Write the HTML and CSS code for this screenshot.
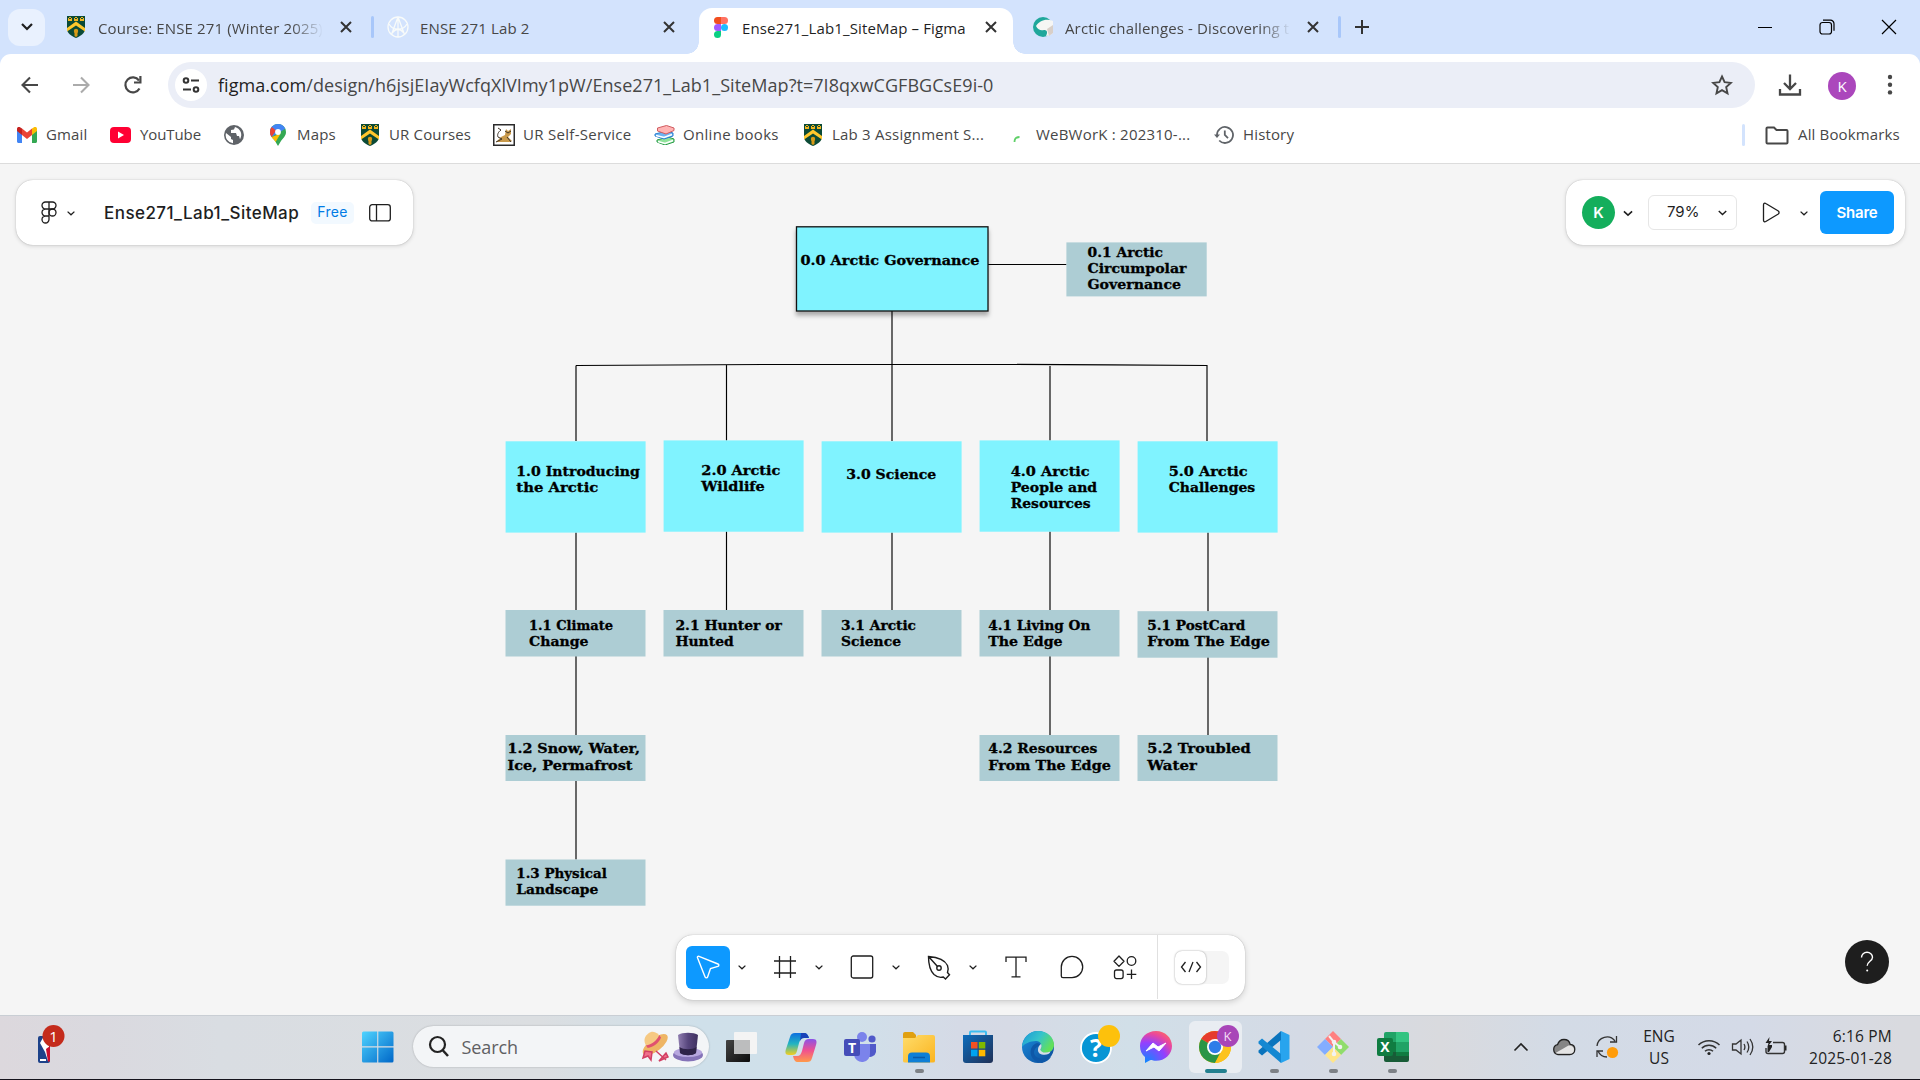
FILE: index.html
```html
<!DOCTYPE html>
<html lang="en">
<head>
<meta charset="utf-8">
<title>Ense271_Lab1_SiteMap – Figma</title>
<link rel="stylesheet" href="styles.css">
</head>
<body>
<svg class="defs" width="0" height="0" aria-hidden="true">
  <defs>
    <symbol id="close" viewBox="0 0 20 20"><path d="M5 5l10 10M15 5L5 15" fill="none" stroke="currentColor" stroke-width="2"/></symbol>
    <symbol id="chev" viewBox="0 0 10 10"><path d="M1.6 3.6L5 6.8l3.4-3.2" fill="none" stroke="#1e1e1e" stroke-width="1.3"/></symbol>
    <symbol id="crest" viewBox="0 0 18 22">
      <path d="M0 0h18v13c0 4-4 7-9 9c-5-2-9-5-9-9z" fill="#0b4a36"/>
      <path d="M1 1h4v4H1zM7 1h4v4H7zM13 1h4v4h-4z" fill="#f2b51e"/>
      <path d="M1 1l2 2 2-2M7 1l2 2 2-2M13 1l2 2 2-2" stroke="#0b4a36" fill="none"/>
      <path d="M0 12l9-6.500 9 6.500v3.500l-9-6-9 6z" fill="#ffc72c"/>
      <circle cx="9" cy="15" r="2.200" fill="#d99a16"/><path d="M7.500 16h3v4l-1.500 1-1.500-1z" fill="#d99a16"/>
    </symbol>
    <linearGradient id="win" x1="0" y1="0" x2="1" y2="1"><stop offset="0" stop-color="#4fd4ff"/><stop offset="1" stop-color="#0067c8"/></linearGradient>
    <linearGradient id="copA" x1="0" y1="0" x2="0" y2="1"><stop offset="0" stop-color="#0c6fe0"/><stop offset=".5" stop-color="#23b5c0"/><stop offset="1" stop-color="#f5cf1d"/></linearGradient>
    <linearGradient id="copB" x1="0" y1="0" x2="0" y2="1"><stop offset="0" stop-color="#8b52e8"/><stop offset=".5" stop-color="#f0518f"/><stop offset="1" stop-color="#ff9a4a"/></linearGradient>
    <linearGradient id="fold" x1="0" y1="0" x2="1" y2="1"><stop offset="0" stop-color="#ffdc6a"/><stop offset="1" stop-color="#fbb41f"/></linearGradient>
    <linearGradient id="store" x1="0" y1="0" x2="1" y2="1"><stop offset="0" stop-color="#0d6dbd"/><stop offset="1" stop-color="#203056"/></linearGradient>
    <linearGradient id="edgeA" x1="0" y1="0" x2="1" y2=".5"><stop offset="0" stop-color="#1a97d8"/><stop offset=".55" stop-color="#35c4cb"/><stop offset="1" stop-color="#62e05a"/></linearGradient>
    <linearGradient id="edgeB" x1="0" y1="0" x2="1" y2="1"><stop offset="0" stop-color="#1b8ede"/><stop offset="1" stop-color="#0c4a98"/></linearGradient>
    <radialGradient id="msg" cx=".2" cy="1" r="1.150"><stop offset="0" stop-color="#0a8bff"/><stop offset=".55" stop-color="#9340ff"/><stop offset=".8" stop-color="#e8479f"/><stop offset="1" stop-color="#ff6a60"/></radialGradient>
    <linearGradient id="tvA" x1="0" y1="0" x2="1" y2="1"><stop offset="0" stop-color="#444"/><stop offset="1" stop-color="#0c0c0c"/></linearGradient>
    <linearGradient id="hatA" x1="0" y1="0" x2="1" y2="0"><stop offset="0" stop-color="#8f7db0"/><stop offset=".5" stop-color="#57467d"/><stop offset="1" stop-color="#3f3160"/></linearGradient>
  </defs>
</svg>

<header class="tabs">
  <button class="tab-search"><svg width="14" height="10" viewBox="0 0 14 10"><path d="M2 2l5 5 5-5" fill="none" stroke="#1f1f1f" stroke-width="2.200"/></svg></button>
  <div class="tab tab-course">
    <svg width="18" height="22"><use href="#crest"/></svg>
    <span class="label fade">Course: ENSE 271 (Winter 2025)</span>
    <svg class="x" width="20" height="20"><use href="#close"/></svg>
  </div>
  <i class="sep"></i>
  <div class="tab tab-lab">
    <svg width="22" height="22" viewBox="0 0 22 22" fill="none" stroke="#f8fbfa" stroke-width="1.300"><circle cx="11" cy="11" r="10"/><path d="M11 1L4.500 18.500M11 1l6.500 17.500M2 8c4 7 14 7 18 0M5 17c4-5 8-5 12 0M11 1v20"/></svg>
    <span class="label">ENSE 271 Lab 2</span>
    <svg class="x" width="20" height="20"><use href="#close"/></svg>
  </div>
  <div class="tab tab-active">
    <svg width="14" height="21" viewBox="0 0 14 21"><path d="M3.500 0H7v7H3.500a3.500 3.500 0 010-7z" fill="#f24e1e"/><path d="M7 0h3.500a3.500 3.500 0 010 7H7z" fill="#ff7262"/><path d="M3.500 7H7v7H3.500a3.500 3.500 0 010-7z" fill="#a259ff"/><circle cx="10.500" cy="10.500" r="3.500" fill="#1abcfe"/><path d="M3.500 14H7v3.500A3.500 3.500 0 113.500 14z" fill="#0acf83"/></svg>
    <span class="label">Ense271_Lab1_SiteMap – Figma</span>
    <svg class="x" width="20" height="20"><use href="#close"/></svg>
  </div>
  <div class="tab tab-arctic">
    <svg width="20" height="20" viewBox="0 0 20 20"><circle cx="10" cy="10" r="10" fill="#1fa79b"/><path d="M3 9c3-5 10-8 17-5v12c-2 2-4 3-7 3 2-4 1-6-2-6-3 1-6 0-8-4z" fill="#f6f6f4"/><path d="M14 12l6-4v8l-4 3z" fill="#d8cfc8"/></svg>
    <span class="label fade">Arctic challenges - Discovering t</span>
    <svg class="x" width="20" height="20"><use href="#close"/></svg>
  </div>
  <i class="sep"></i>
  <svg class="plus" width="16" height="16" viewBox="0 0 16 16"><path d="M8 1v14M1 8h14" stroke="#333" stroke-width="2"/></svg>
  <div class="winctl">
    <svg width="16" height="16" viewBox="0 0 16 16"><path d="M1 8.500h14" stroke="#000"/></svg>
    <svg width="16" height="16" viewBox="0 0 16 16" fill="none" stroke="#000" stroke-width="1.200"><rect x="1" y="3.500" width="11.500" height="11.500" rx="2.500"/><path d="M4 1.200h7.500a3.500 3.500 0 013.500 3.500v7"/></svg>
    <svg width="16" height="16" viewBox="0 0 16 16"><path d="M1 1l14 14M15 1L1 15" stroke="#000" stroke-width="1.200"/></svg>
  </div>
</header>

<div class="chrome">
  <nav class="navbar">
    <svg class="back" width="22" height="22" viewBox="0 0 22 22" fill="none" stroke="#474747" stroke-width="2.100"><path d="M19 11H4M11 3.500L3.500 11l7.500 7.500"/></svg>
    <svg class="fwd" width="22" height="22" viewBox="0 0 22 22" fill="none" stroke="#ababab" stroke-width="2.100"><path d="M3 11h15M11 3.500l7.500 7.500-7.500 7.500"/></svg>
    <svg class="reload" width="22" height="22" viewBox="0 0 22 22"><path d="M17.500 14.500A7.500 7.500 0 1117 6.500" fill="none" stroke="#474747" stroke-width="2.200"/><path d="M19.500 2v7.500H12V7.400h5.300V2z" fill="#474747"/></svg>
    <div class="omnibox">
      <span class="site"><svg width="18" height="16" viewBox="0 0 18 16" fill="none" stroke="#333" stroke-width="2"><circle cx="4" cy="3.500" r="2.300"/><path d="M9 3.500h8M1 12.500h8"/><circle cx="14" cy="12.500" r="2.300"/></svg></span>
      <span class="url"><b>figma.com</b>/design/h6jsjEIayWcfqXlVImy1pW/Ense271_Lab1_SiteMap?t=7I8qxwCGFBGCsE9i-0</span>
      <svg class="star" width="22" height="22" viewBox="0 0 22 22"><path d="M11 2.500l2.600 5.700 6.200.7-4.600 4.200 1.300 6.200L11 16.100l-5.500 3.200 1.300-6.200L2.200 8.900l6.200-.7z" fill="none" stroke="#474747" stroke-width="1.900"/></svg>
    </div>
    <svg class="dl" width="24" height="24" viewBox="0 0 24 24" fill="none" stroke="#474747" stroke-width="2.300"><path d="M12 1.500v14M6 10l6 6 6-6M2 16v5.500h20V16"/></svg>
    <span class="avatar purple">K</span>
    <svg class="dots" width="6" height="22" viewBox="0 0 6 22" fill="#474747"><circle cx="3" cy="3" r="2.200"/><circle cx="3" cy="10.700" r="2.200"/><circle cx="3" cy="18.400" r="2.200"/></svg>
  </nav>
  <nav class="bookmarks">
    <a class="bm gmail"><svg width="20" height="16" viewBox="0 0 20 16"><path d="M0 2v12.500c0 .8.700 1.500 1.500 1.500H5V5.500z" fill="#4285f4"/><path d="M20 2v12.500c0 .8-.7 1.500-1.500 1.500H15V5.500z" fill="#34a853"/><path d="M15 1.500L17 .3c1.500-1 3 0 3 1.800V4l-5 4z" fill="#fbbc04"/><path d="M5 1.500L3 .3C1.500-.7 0 .3 0 2.100V4l5 4z" fill="#c5221f"/><path d="M5 1.500l5 4 5-4V8l-5 4-5-4z" fill="#ea4335"/></svg><span>Gmail</span></a>
    <a class="bm yt"><svg width="21" height="16" viewBox="0 0 21 16"><rect width="21" height="16" rx="4" fill="#ff0033"/><path d="M8 4.500v7l6-3.500z" fill="#fff"/></svg><span>YouTube</span></a>
    <a class="bm globe"><svg width="20" height="20" viewBox="0 0 20 20"><circle cx="10" cy="10" r="10" fill="#5f6368"/><path d="M2 8l5 4v2l2 1v3.200A8 8 0 012 8zM11 2.100l-1 2.400-3 .5v3h5l1 3h2l1 3.200A8 8 0 0011 2.100z" fill="#fff"/></svg></a>
    <a class="bm maps"><svg width="16" height="22" viewBox="0 0 16 22"><path d="M8 0a8 8 0 00-8 8c0 4 3 6 5 9l3 5 3-5c2-3 5-5 5-9a8 8 0 00-8-8z" fill="#34a853"/><path d="M8 0a8 8 0 017.300 4.800L1.500 13C.6 11.500 0 10 0 8a8 8 0 018-8z" fill="#4285f4"/><path d="M0 8c0-2 .7-3.700 1.800-5.100L6 6.500 1.600 13C.6 11.500 0 10 0 8z" fill="#ea4335"/><path d="M1.600 13L10.500 9.700 5.600 18C4.500 16 2.500 14.600 1.600 13z" fill="#fbbc04"/><circle cx="8" cy="8" r="2.900" fill="#fff"/></svg><span>Maps</span></a>
    <a class="bm urc"><svg width="18" height="22"><use href="#crest"/></svg><span>UR Courses</span></a>
    <a class="bm urs"><svg width="22" height="22" viewBox="0 0 22 22"><rect x=".75" y=".75" width="20.500" height="20.500" fill="#fff" stroke="#2b2b2b" stroke-width="1.500"/><path d="M3 18l5-5 4-2 1-6 2 2 3-2v5l-3 3 4 4-2 1z" fill="#c99a4b"/><path d="M8 6c-3 2-4 5-3 7l4 2M12 7l3 2 3-2M3 18l6-3M14 13l4 5M5 4l3 2" fill="none" stroke="#3c3227"/></svg><span>UR Self-Service</span></a>
    <a class="bm books"><svg width="22" height="20" viewBox="0 0 22 20" stroke-width="1"><path d="M3 15l11-3 6 2v3l-9 3-8-3z" fill="#8fe39a" stroke="#2a9b4a"/><path d="M4 16.500l7 2 8-3" stroke="#fff" stroke-width="1.500" fill="none"/><path d="M1 9l12-3 6 2v3l-9 3-9-3z" fill="#6cb4f2" stroke="#2c7fd0"/><path d="M2 10.500l8 2 8-3" stroke="#fff" stroke-width="1.500" fill="none"/><path d="M3.500 3l9-2.500L20 3v2.500L12 9 3.500 6z" fill="#ffb4b4" stroke="#d05b5f"/></svg><span>Online books</span></a>
    <a class="bm lab3"><svg width="18" height="22"><use href="#crest"/></svg><span>Lab 3 Assignment S...</span></a>
    <a class="bm wework"><svg width="9" height="20" viewBox="0 0 9 20"><path d="M1.500 17c0-4 2-5 5-5" fill="none" stroke="#5fd068" stroke-width="1.800"/></svg><span>WeBWorK : 202310-...</span></a>
    <a class="bm hist"><svg width="20" height="20" viewBox="0 0 20 20" fill="none" stroke="#5f6368" stroke-width="1.800"><path d="M3 10a8 8 0 112.200 5.500M10.800 5.500V10l3.200 3.200"/><path d="M0 9.500h6L3 13z" fill="#5f6368" stroke="none"/></svg><span>History</span></a>
    <i class="bsep"></i>
    <a class="bm all"><svg width="24" height="19" viewBox="0 0 24 19"><path d="M1.500 2.500a1 1 0 011-1H9L11.500 4h10a1 1 0 011 1v11.500a1 1 0 01-1 1h-19a1 1 0 01-1-1z" fill="none" stroke="#474747" stroke-width="2"/></svg><span>All Bookmarks</span></a>
  </nav>
</div>

<main class="canvas">
  <svg class="sitemap" width="1920" height="851" viewBox="0 164 1920 851">
    <g class="wires">
      <path d="M988 264.500h78.500M892 311v130M576 441v-75.500M576 365.500Q892 363 1207 365.500V441M726.500 365v75.500M1050 366v74.500"/>
      <path d="M576 532.500V610M726.500 531.500V610M892 532.500V610M1050 531.500V610M1208 532.500V611.500"/>
      <path d="M576 656v79M1050 656v79M1208 657v78M576 781v78.500"/>
    </g>
    <rect class="main root" x="796.500" y="226.800" width="191.500" height="84.200"/>
    <rect class="sub" x="1066.400" y="242.400" width="140.300" height="54"/>
    <rect class="main" x="505.600" y="441.300" width="140" height="91.300"/>
    <rect class="main" x="663.600" y="440.400" width="140" height="91.300"/>
    <rect class="main" x="821.600" y="441.300" width="140" height="91.300"/>
    <rect class="main" x="979.600" y="440.400" width="140" height="91.300"/>
    <rect class="main" x="1137.600" y="441.300" width="140" height="91.300"/>
    <rect class="sub" x="505.500" y="610" width="140" height="46.500"/>
    <rect class="sub" x="663.500" y="610" width="140" height="46.500"/>
    <rect class="sub" x="821.500" y="610" width="140" height="46.500"/>
    <rect class="sub" x="979.500" y="610" width="140" height="46.500"/>
    <rect class="sub" x="1137.500" y="611.200" width="140" height="46.500"/>
    <rect class="sub" x="505.500" y="735" width="140" height="46"/>
    <rect class="sub" x="979.500" y="735" width="140" height="46"/>
    <rect class="sub" x="1137.500" y="735" width="140" height="46"/>
    <rect class="sub" x="505.500" y="859.500" width="140" height="46.200"/>
    <g class="names">
      <text x="800.500" y="265.300" textLength="179" lengthAdjust="spacingAndGlyphs">0.0 Arctic Governance</text>
      <text x="1087.500" y="257" textLength="75.500" lengthAdjust="spacingAndGlyphs">0.1 Arctic</text>
      <text x="1087.500" y="273.200" textLength="99" lengthAdjust="spacingAndGlyphs">Circumpolar</text>
      <text x="1087.500" y="289.400" textLength="93.500" lengthAdjust="spacingAndGlyphs">Governance</text>
      <text x="516.300" y="476" textLength="123.500" lengthAdjust="spacingAndGlyphs">1.0 Introducing</text>
      <text x="516.300" y="492.200" textLength="82" lengthAdjust="spacingAndGlyphs">the Arctic</text>
      <text x="701.300" y="475" textLength="79" lengthAdjust="spacingAndGlyphs">2.0 Arctic</text>
      <text x="701.300" y="491.200" textLength="63.500" lengthAdjust="spacingAndGlyphs">Wildlife</text>
      <text x="846.300" y="479.200" textLength="90" lengthAdjust="spacingAndGlyphs">3.0 Science</text>
      <text x="1010.700" y="476" textLength="79" lengthAdjust="spacingAndGlyphs">4.0 Arctic</text>
      <text x="1010.700" y="492.200" textLength="86.500" lengthAdjust="spacingAndGlyphs">People and</text>
      <text x="1010.700" y="508.400" textLength="80" lengthAdjust="spacingAndGlyphs">Resources</text>
      <text x="1168.700" y="476" textLength="79" lengthAdjust="spacingAndGlyphs">5.0 Arctic</text>
      <text x="1168.700" y="492.200" textLength="86.500" lengthAdjust="spacingAndGlyphs">Challenges</text>
      <text x="529" y="629.800" textLength="84" lengthAdjust="spacingAndGlyphs">1.1 Climate</text>
      <text x="529" y="646" textLength="59.500" lengthAdjust="spacingAndGlyphs">Change</text>
      <text x="675.400" y="629.800" textLength="106.500" lengthAdjust="spacingAndGlyphs">2.1 Hunter or</text>
      <text x="675.400" y="646" textLength="58.300" lengthAdjust="spacingAndGlyphs">Hunted</text>
      <text x="841" y="629.800" textLength="75" lengthAdjust="spacingAndGlyphs">3.1 Arctic</text>
      <text x="841" y="646" textLength="60" lengthAdjust="spacingAndGlyphs">Science</text>
      <text x="988.300" y="629.800" textLength="102" lengthAdjust="spacingAndGlyphs">4.1 Living On</text>
      <text x="988.300" y="646" textLength="74.300" lengthAdjust="spacingAndGlyphs">The Edge</text>
      <text x="1147.300" y="629.800" textLength="98" lengthAdjust="spacingAndGlyphs">5.1 PostCard</text>
      <text x="1147.300" y="646" textLength="122.500" lengthAdjust="spacingAndGlyphs">From The Edge</text>
      <text x="507.500" y="753.400" textLength="132.500" lengthAdjust="spacingAndGlyphs">1.2 Snow, Water,</text>
      <text x="507.500" y="769.600" textLength="125" lengthAdjust="spacingAndGlyphs">Ice, Permafrost</text>
      <text x="988.300" y="753.400" textLength="109" lengthAdjust="spacingAndGlyphs">4.2 Resources</text>
      <text x="988.300" y="769.600" textLength="122.500" lengthAdjust="spacingAndGlyphs">From The Edge</text>
      <text x="1147.300" y="753.400" textLength="103.500" lengthAdjust="spacingAndGlyphs">5.2 Troubled</text>
      <text x="1147.300" y="769.600" textLength="49.500" lengthAdjust="spacingAndGlyphs">Water</text>
      <text x="516.300" y="878" textLength="90.500" lengthAdjust="spacingAndGlyphs">1.3 Physical</text>
      <text x="516.300" y="894.200" textLength="82" lengthAdjust="spacingAndGlyphs">Landscape</text>
    </g>
  </svg>

  <div class="overlay">
    <div class="row-top">
      <section class="panel file">
        <svg class="logo" width="16" height="23" viewBox="0 0 16 23" fill="none" stroke="#1e1e1e" stroke-width="1.300"><path d="M8 1H4.500a3.500 3.500 0 000 7H8zM8 1h3.500a3.500 3.500 0 010 7H8zM8 8H4.500a3.500 3.500 0 000 7H8zM8 15H4.500A3.500 3.500 0 108 18.500z"/><circle cx="11.500" cy="11.500" r="3.500"/></svg>
        <svg width="10" height="10"><use href="#chev"/></svg>
        <h1>Ense271_Lab1_SiteMap</h1>
        <span class="free">Free</span>
        <svg width="22" height="18" viewBox="0 0 22 18" fill="none" stroke="#1e1e1e" stroke-width="1.300"><rect x=".7" y=".7" width="20.600" height="16.200" rx="2.500"/><path d="M7.500 .7v16.200"/></svg>
      </section>
      <section class="panel share">
        <span class="avatar green">K</span>
        <svg class="c1" width="12" height="12"><use href="#chev"/></svg>
        <div class="zoom"><span>79%</span><svg width="11" height="11"><use href="#chev"/></svg></div>
        <svg class="play" width="19" height="21" viewBox="0 0 19 21"><path d="M1.500 2.800C1.500 1.400 2.700 .8 3.800 1.500L16.300 9c1 .7 1 2.300 0 3L3.800 19.500c-1.100.7-2.300.1-2.300-1.300z" fill="none" stroke="#1e1e1e" stroke-width="1.300"/></svg>
        <svg class="c2" width="10" height="10"><use href="#chev"/></svg>
        <button class="share-btn">Share</button>
      </section>
    </div>

    <div class="row-bottom">
      <section class="panel tools">
        <span class="tool on"><svg width="24" height="24" viewBox="0 0 24 24"><path d="M1.500 2.800C1 1.700 2 .9 3 1.300L22 9c1.200.5 1.100 2.100-.1 2.400L14.500 13.500 11.600 22c-.4 1.200-2 1.200-2.500 0z" fill="none" stroke="#fff" stroke-width="1.400"/></svg></span>
        <svg class="tc" width="10" height="10"><use href="#chev"/></svg>
        <span class="tool"><svg width="22" height="24" viewBox="0 0 22 24" stroke="#1e1e1e" stroke-width="1.300"><path d="M5.500 1v22M16.500 1v22M0 6h22M0 18h22"/></svg></span>
        <svg class="tc" width="10" height="10"><use href="#chev"/></svg>
        <span class="tool"><svg width="24" height="24" viewBox="0 0 24 24"><rect x="1.300" y="1" width="21.400" height="22" rx="2" fill="none" stroke="#1e1e1e" stroke-width="1.300"/></svg></span>
        <svg class="tc" width="10" height="10"><use href="#chev"/></svg>
        <span class="tool"><svg width="24" height="25" viewBox="0 0 24 25" fill="none" stroke="#1e1e1e" stroke-width="1.400"><path d="M1.500 1.500l9 10M1.500 1.500C8 2 17.500 4 20.500 10.500c1 2.500.5 5.500 0 7l2 2.200-4 4.300-2.200-2c-3 .8-6.500 0-9.300-2.500C2.500 15 1.500 7 1.500 1.500z"/><circle cx="12" cy="13" r="2.200"/></svg></span>
        <svg class="tc" width="10" height="10"><use href="#chev"/></svg>
        <span class="tool t-text"><svg width="22" height="22" viewBox="0 0 22 22" fill="none" stroke="#1e1e1e" stroke-width="1.300"><path d="M1 6V1.200h20V6M11 1.200v19.600M6.500 20.800h9"/></svg></span>
        <span class="tool t-chat"><svg width="24" height="24" viewBox="0 0 24 24"><path d="M1.300 12a10.700 10.700 0 1110.700 10.700H3a1.700 1.700 0 01-1.700-1.700z" fill="none" stroke="#1e1e1e" stroke-width="1.300"/></svg></span>
        <span class="tool t-res"><svg width="24" height="25" viewBox="0 0 24 25" fill="none" stroke="#1e1e1e" stroke-width="1.300"><path d="M6 1l5 5.200-5 5.200-5-5.200z" stroke-linejoin="round"/><circle cx="18.500" cy="6" r="4.300"/><rect x="1.500" y="15" width="8.600" height="8.600" rx="2"/><path d="M18.500 14.500v9.500M13.800 19.300h9.500"/></svg></span>
        <i class="divider"></i>
        <span class="dev"><span class="knob"><svg width="22" height="12" viewBox="0 0 22 12" fill="none" stroke="#1e1e1e" stroke-width="1.300"><path d="M5.500 1L1.500 6l4 5M16.500 1l4 5-4 5M13 1L9 11"/></svg></span></span>
      </section>
      <button class="help"><svg width="14" height="22" viewBox="0 0 14 22"><path d="M1.500 6.500C1.500 3.500 4 1.200 7 1.200s5.500 2.200 5.500 5c0 4-5.300 4.300-5.300 8.600" fill="none" stroke="#fff" stroke-width="1.400"/><circle cx="7.200" cy="19.500" r="1" fill="#fff"/></svg></button>
    </div>
  </div>
</main>

<footer class="taskbar">
  <div class="widgets">
    <svg width="36" height="44" viewBox="0 0 36 44"><rect x="2" y="14" width="12" height="27" rx="2" fill="#1d428a"/><path d="M8 14h5v25h-1L9 30l-5-9z" fill="#fff"/><path d="M10 27l4-3v15l-2 1z" fill="#c8102e"/><path d="M4 38h6" stroke="#fff" stroke-width="2"/><circle cx="17.500" cy="14" r="11" fill="#c42b1c"/><text x="17.500" y="19.500" text-anchor="middle" font-size="15" fill="#fff">1</text></svg>
  </div>
  <div class="start"><svg width="32" height="32" viewBox="0 0 32 32" fill="url(#win)"><path d="M0 2q0-1.500 1.500-1.500H15.200V15.200H0zM16.300 .5H30q1.500 0 1.500 1.500v13.200H16.300zM0 16.500h15.200V31.500H1.500Q0 31.500 0 30zM16.300 16.500h15.200V30q0 1.500-1.500 1.500H16.300z"/></svg></div>
  <div class="search">
    <svg width="22" height="24" viewBox="0 0 22 24"><circle cx="9.500" cy="9.500" r="7.500" fill="none" stroke="#222" stroke-width="2.200"/><path d="M14.500 15l5.500 6" stroke="#222" stroke-width="2.500"/></svg>
    <span>Search</span>
    <svg width="64" height="34" viewBox="0 0 64 34">
      <g transform="rotate(-38 14 13)"><ellipse cx="14" cy="15" rx="15" ry="6.500" fill="#eeb564"/><path d="M6 13c0-7 3-11 9-11s8 4 8 11z" fill="#f6c983"/><path d="M6 13c5 3 12 3 17 0v-3c-5 3-12 3-17 0z" fill="#e0516f"/></g>
      <path d="M5 21l-2 7 5-2 3 4 1-8zM16 21l10 9M26 23l-7 8 9-4z" fill="#ef6f8a" stroke="#d23f63" stroke-width="1.500"/>
      <ellipse cx="48" cy="25" rx="15" ry="6.500" fill="#8573b8"/><ellipse cx="48" cy="22.500" rx="14" ry="4.500" fill="#b6a6de"/><path d="M38 5c4-3 16-3 20 0l-2 18c-4 3-12 3-16 0z" fill="url(#hatA)"/><path d="M39.500 17c4 3 13 3 17 0l-.5 6c-4 3-12 3-16 0z" fill="#2e2348"/>
    </svg>
  </div>
  <div class="apps">
    <span class="app"><svg width="36" height="34" viewBox="0 0 36 34"><rect x="2" y="10" width="24" height="22" rx="1" fill="url(#tvA)"/><rect x="10" y="2" width="23" height="22" rx="1" fill="#f4f4f4"/><rect x="10" y="10" width="16" height="14" fill="#bcbdbe"/></svg></span>
    <span class="app"><svg width="34" height="34" viewBox="0 0 34 34"><path d="M11 3h9c3 0 4 2 5 5h-5c-3 0-4 2-5 5l-2 8c-1 3-2 4-5 4H5c-4 0-4-3-3-6l4-12c1-3 2-4 5-4z" fill="url(#copA)"/><path d="M17 3h3c3 0 4 2 5 5h-5c-2 0-3 1-4 3z" fill="#1841b8"/><path d="M23 32h-9c-3 0-4-2-5-6h4c3 0 4-2 5-5l2-8c1-3 2-4 5-4h4c4 0 4 3 3 6l-4 13c-1 3-2 4-5 4z" fill="url(#copB)"/></svg></span>
    <span class="app"><svg width="34" height="34" viewBox="0 0 34 34"><circle cx="29" cy="9" r="3.600" fill="#5059c9"/><path d="M24 14h9v8a6 6 0 01-9 4z" fill="#5059c9"/><circle cx="19" cy="7" r="5" fill="#7b83eb"/><path d="M11 14h16v9a8 8 0 01-16 2z" fill="#7b83eb"/><rect x="1" y="9" width="16" height="17" rx="2" fill="#454db8"/><text x="9" y="22.500" text-anchor="middle" font-size="14" font-weight="bold" fill="#fff">T</text></svg></span>
    <span class="app run"><svg width="34" height="34" viewBox="0 0 34 34"><path d="M1 4q0-2 2-2h8l3 3v7H1z" fill="#e0a010"/><path d="M1 8h12l3-3h15q2 0 2 2v24q0 1.500-2 1.500H3Q1 32.500 1 31z" fill="url(#fold)"/><path d="M6 32.500v-6q0-4 4-4h14q4 0 4 4v6z" fill="#0f7fd6"/><path d="M11 27.500h12" stroke="#0a5aa8" stroke-width="1.500"/></svg></span>
    <span class="app"><svg width="34" height="34" viewBox="0 0 34 34"><path d="M9 6V2.500q0-1 1-1h14q1 0 1 1V6" fill="none" stroke="#3cbdf2" stroke-width="2"/><path d="M2 5h30v25q0 3-3 3H5q-3 0-3-3z" fill="url(#store)"/><path d="M10 12h6.500v6.500H10z" fill="#f25022"/><path d="M17.800 12h6.500v6.500h-6.500z" fill="#7fba00"/><path d="M10 19.800h6.500v6.500H10z" fill="#00a4ef"/><path d="M17.800 19.800h6.500v6.500h-6.500z" fill="#ffb900"/></svg></span>
    <span class="app"><svg width="34" height="34" viewBox="0 0 34 34"><circle cx="17" cy="17" r="16" fill="url(#edgeB)"/><path d="M1 17C2 7 9 1 17 1c9 0 16 6 16 14 0 5-4 8-9 8-3 0-5-1-5-3 3-4 1-9-4-9-6 0-12 3-14 6z" fill="url(#edgeA)"/><path d="M19 20c-1-1 2-2 1-5-3 1-7 3-7 8 1 6 8 7 17 4-2 3-5 5-9 6-8-1-13-7-11-14 1-3 3-5 6-6 5 1 5 5 3 7z" fill="#0e58a8"/><path d="M20 14c1.500 3-.5 4.500-.5 6 .5 2.500 5 3.500 10 1.500-1 4-8 4-11 2-2.500-2-2-7 1.500-9.500z" fill="#d5dde8"/></svg></span>
    <span class="app"><svg width="36" height="38" viewBox="0 0 36 38"><circle cx="17" cy="20" r="15" fill="#0795d4" stroke="#fff" stroke-width="1.800"/><text x="17" y="29" text-anchor="middle" font-size="25" font-weight="bold" fill="#fff">?</text></svg><i class="badge yellow"></i></span>
    <span class="app"><svg width="34" height="34" viewBox="0 0 34 34"><path d="M17 1C8 1 1 7.500 1 16c0 5 2 8.500 5 11v6l5.500-3c2 .6 3.500.8 5.500.8 9 0 16-6.500 16-14.800S26 1 17 1z" fill="url(#msg)"/><path d="M7 21l7-8 5 4 8-4-7 8-5-4z" fill="#fff" stroke="#fff"/></svg></span>
    <span class="app front run"><svg width="34" height="34" viewBox="0 0 34 34"><circle cx="17" cy="17" r="16" fill="#fbbc05"/><path d="M17 17L3.150 9A16 16 0 0130.850 9z" fill="#e63b2e"/><path d="M17 17L3.150 9A16 16 0 0017 33l6-12z" fill="#2a9547"/><path d="M17 9h13.850A16 16 0 0117 33l7-12z" fill="#fcc31e"/><circle cx="17" cy="17" r="8" fill="#fff"/><circle cx="17" cy="17" r="6.200" fill="#2f7de9"/></svg><i class="badge violet">K</i></span>
    <span class="app run"><svg width="34" height="34" viewBox="0 0 34 34"><path d="M24 1l8.500 4v24L24 33l-1-8V9z" fill="#28a4ee"/><path d="M24 1v9L5 25.500 1.500 22.500v-2z" fill="#0a74bd"/><path d="M24 33v-9L5 8.500l-3.500 3v2z" fill="#1488d2"/></svg></span>
    <span class="app run"><svg width="34" height="34" viewBox="0 0 34 34"><path d="M17 1l8 8-8 8-8-8z" fill="#ff8080"/><path d="M9 9l8 8-8 8-8-8z" fill="#83adff"/><path d="M25 9l8 8-8 8-8-8z" fill="#90dd6c"/><path d="M17 17l8 8-8 8-8-8z" fill="#ffe58a"/><path d="M13 6l5 6v12M18 12l6 5" stroke="#f2f2f2" stroke-width="2" fill="none"/><g fill="#f2f2f2"><circle cx="18" cy="12" r="2.300"/><circle cx="18" cy="24" r="2.300"/><circle cx="24" cy="17" r="2.300"/></g></svg></span>
    <span class="app run"><svg width="34" height="34" viewBox="0 0 34 34"><path d="M8 4q0-2 2-2h10v10H8z" fill="#21a366"/><path d="M20 2h11q2 0 2 2v8H20z" fill="#33c481"/><path d="M8 12h12v10H8z" fill="#107c41"/><path d="M20 12h13v10H20z" fill="#21a366"/><path d="M8 22h25v8q0 2-2 2H10q-2 0-2-2z" fill="#185c37"/><path d="M20 22h13v4H20z" fill="#107c41"/><rect x="1" y="8" width="16" height="18" rx="2" fill="#107c41"/><text x="9" y="22" text-anchor="middle" font-size="14" font-weight="bold" fill="#fff">X</text></svg></span>
  </div>
  <div class="tray">
    <span><svg width="16" height="10" viewBox="0 0 16 10"><path d="M1.500 8.500L8 2l6.500 6.500" fill="none" stroke="#222" stroke-width="1.600"/></svg></span>
    <span><svg width="24" height="18" viewBox="0 0 24 18"><path d="M6 16.500a5 5 0 01-.5-9.800C6.500 3.500 9 1.500 12 1.500c3.200 0 5.500 2 6.200 4.800 3 .2 4.600 2.500 4.600 5 0 3-2 5.200-5 5.200z" fill="#858585" stroke="#222" stroke-width="1.300"/><path d="M3.500 15l13-7.500c4 0 5.500 2 5.500 4.200 0 2.500-1.800 4-4 4H6z" fill="#e4e4e4"/></svg></span>
    <span><svg width="24" height="26" viewBox="0 0 24 26"><path d="M2 12A10 10 0 0120 7M21.500 2v6H15M2 23v-6h6M3 17a10 10 0 009 6" fill="none" stroke="#333" stroke-width="1.300"/><circle cx="17.500" cy="18.500" r="5.600" fill="#ff9c0a"/></svg></span>
    <span class="lang">ENG<br>US</span>
    <span><svg width="24" height="18" viewBox="0 0 24 18" fill="none" stroke="#333" stroke-width="1.500"><path d="M1.500 7a14.800 14.800 0 0121 0M4.800 10.300a10.200 10.200 0 0114.400 0M8 13.300a5.700 5.700 0 018 0"/><circle cx="12" cy="15.500" r="1.600" fill="#222" stroke="none"/></svg></span>
    <span><svg width="24" height="20" viewBox="0 0 24 20" fill="none" stroke="#333" stroke-width="1.300"><path d="M1.500 7v6H5l5 4V3L5 7zM13 7q1.800 3 0 6M16 4.500q3.600 5.500 0 11M19 2q5.600 8 0 16"/></svg></span>
    <span><svg width="24" height="20" viewBox="0 0 24 20"><path d="M9 5.500h9.500a2 2 0 012 2v7a2 2 0 01-2 2H4a2 2 0 01-2-2V11" fill="none" stroke="#333" stroke-width="1.400"/><path d="M21 8.500h1.500v5H21zM4 8h4v2L5 15H3.500v-4z" fill="#222"/><path d="M5.500 0L1.500 6h3l-1 4L8 4H5z" fill="#222"/></svg></span>
    <span class="clock">6:16 PM<br>2025-01-28</span>
  </div>
</footer>
</body>
</html>
```
FILE: styles.css
```css
* { box-sizing: border-box; }
body {
  margin: 0;
  width: 1920px;
  height: 1080px;
  overflow: hidden;
  display: flex;
  flex-direction: column;
  font-family: "Open Sans", "Noto Sans", sans-serif;
  color: #1f1f1f;
  background: #f5f5f5;
}
svg { display: block; flex: none; }
.defs { position: absolute; }
button { border: 0; padding: 0; font: inherit; }
i { font-style: normal; }

/* tab strip */
.tabs {
  flex: none;
  height: 54px;
  display: flex;
  align-items: center;
  padding-left: 8px;
  background: #d3e3fd;
}
.tab-search {
  width: 37px; height: 37px;
  margin-right: 10px;
  border-radius: 12px;
  background: #e9f1fe;
  display: grid;
  place-items: center;
}
.tab {
  height: 46px;
  margin-top: 8px;
  padding-bottom: 8px;
  display: flex;
  align-items: center;
  font-size: 15px;
  color: #474747;
}
.tab .label {
  flex: 1;
  min-width: 0;
  white-space: nowrap;
  overflow: hidden;
  padding-top: 2px;
  letter-spacing: 0.14px;
}
.fade { -webkit-mask-image: linear-gradient(90deg, #000 86%, transparent); mask-image: linear-gradient(90deg, #000 86%, transparent); }
.tab .x { color: #333; }
.tab-course { width: 316px; padding-left: 12px; padding-right: 15px; gap: 13px; }
.tab-lab { width: 325px; padding-left: 13px; padding-right: 20px; gap: 11px; }
.tab-arctic { width: 325px; padding-left: 20px; padding-right: 15px; gap: 12px; }
.tab-active {
  position: relative;
  width: 314px;
  padding-left: 15px;
  padding-right: 12px;
  gap: 14px;
  border-radius: 13px 13px 0 0;
  background: #fff;
  color: #1f1f1f;
}
.tab-active::before, .tab-active::after {
  content: "";
  position: absolute;
  bottom: 0;
  width: 12px; height: 12px;
}
.tab-active::before { left: -12px; background: radial-gradient(circle at 0 0, transparent 11.5px, #fff 12px); }
.tab-active::after { right: -12px; background: radial-gradient(circle at 100% 0, transparent 11.5px, #fff 12px); }
.sep { width: 3px; height: 22px; border-radius: 2px; background: #a8c7fa; }
.plus { margin-left: 13px; }
.winctl { margin-left: auto; margin-right: 23px; display: flex; gap: 46px; }

/* address bar and bookmarks */
.chrome {
  flex: none;
  height: 110px;
  background: linear-gradient(#d3e3fd, #d3e3fd) top / 100% 12px no-repeat;
  border-bottom: 1px solid #dcdcdc;
}
.navbar {
  height: 62px;
  display: flex;
  align-items: center;
  padding-left: 19px;
  background: #fff;
  border-radius: 11px 11px 0 0;
}
.fwd { margin-left: 29px; }
.reload { margin-left: 30px; }
.omnibox {
  width: 1587px; height: 46px;
  margin-left: 24px;
  padding: 0 22px 0 7px;
  border-radius: 23px;
  background: #ebeef7;
  display: flex;
  align-items: center;
}
.site {
  width: 32px; height: 32px;
  border-radius: 50%;
  background: #fff;
  display: grid;
  place-items: center;
}
.url {
  flex: 1;
  margin-left: 11px;
  padding-bottom: 1px;
  font-size: 18px;
  color: #474747;
  letter-spacing: 0.05px;
}
.url b { font-weight: 400; color: #1f1f1f; }
.dl { margin-left: 23px; }
.avatar {
  display: grid;
  place-items: center;
  border-radius: 50%;
  color: #fff;
}
.purple { width: 28px; height: 28px; margin: 2px 0 0 26px; background: #ab47bc; font-size: 15px; }
.dots { margin-left: 31px; }
.bookmarks {
  height: 47px;
  padding: 0 20px 9px 17px;
  display: flex;
  align-items: center;
  background: #fff;
  font-size: 15px;
  color: #474747;
}
.bm { display: flex; align-items: center; white-space: nowrap; letter-spacing: 0.15px; }
.bm span { padding-bottom: 2px; }
.gmail { width: 93px; gap: 9px; }
.yt { width: 114px; gap: 9px; letter-spacing: -0.1px; }
.globe { width: 46px; }
.maps { width: 91px; gap: 11px; }
.urc { width: 132px; gap: 10px; }
.urs { width: 161px; gap: 8px; letter-spacing: 0.3px; }
.books { width: 150px; gap: 7px; letter-spacing: 0.3px; }
.lab3 { width: 209px; gap: 10px; letter-spacing: 0.22px; }
.wework { width: 201px; gap: 14px; letter-spacing: 0.22px; }
.hist { gap: 9px; }
.bsep { width: 3px; height: 22px; margin-left: auto; margin-right: 20px; border-radius: 2px; background: #d3e3fd; }
.all { width: 135px; gap: 9px; }

/* design canvas */
.canvas { flex: none; height: 851px; position: relative; background: #f5f5f5; }
.sitemap { position: absolute; inset: 0; }
.wires path { fill: none; stroke: #000; stroke-width: 1.150; }
.main { fill: #80f3ff; }
.sub { fill: #adcdd4; }
.root { stroke: #111; stroke-width: 1.300; filter: drop-shadow(0 4px 2px rgba(0, 0, 0, .3)); }
.names text {
  font-family: "DejaVu Serif", serif;
  font-weight: 700;
  font-size: 13px;
  fill: #000;
  stroke: #000;
  stroke-width: 0.3px;
}
.overlay {
  position: absolute;
  inset: 0;
  padding: 16px 15px 15px 16px;
  display: flex;
  flex-direction: column;
  justify-content: space-between;
  font-family: Inter, sans-serif;
}
.row-top { display: flex; justify-content: space-between; }
.panel {
  height: 65px;
  border-radius: 17px;
  background: #fff;
  box-shadow: 0 0 1px rgba(0, 0, 0, .3), 0 1px 4px rgba(0, 0, 0, .15);
  display: flex;
  align-items: center;
}
.file { width: 397px; padding-left: 25px; }
.file .logo { margin-right: 9px; }
.file h1 {
  width: 196px;
  margin: 0 11px 0 28px;
  font-size: 17px;
  font-weight: 500;
  letter-spacing: 0.45px;
  color: #1e1e1e;
  white-space: nowrap;
}
.free {
  width: 43px; height: 22px;
  margin-right: 15px;
  padding-bottom: 2px;
  border-radius: 5px;
  background: #f2f9ff;
  color: #007be5;
  font-size: 14px;
  letter-spacing: 0.3px;
  display: grid;
  place-items: center;
}
.share { width: 339px; padding-left: 16px; }
.green { width: 33px; height: 33px; background: #14ae5c; font-size: 15px; font-weight: 600; }
.c1 { margin-left: 7px; }
.zoom {
  width: 89px; height: 35px;
  margin-left: 14px;
  padding: 0 8px 0 18px;
  border: 1px solid #e6e6e6;
  border-radius: 6px;
  font-size: 15px;
  display: flex;
  align-items: center;
  justify-content: space-between;
}
.zoom span { padding-bottom: 2px; }
.play { margin-left: 25px; }
.c2 { margin-left: 18px; }
.share-btn {
  width: 74px; height: 43px;
  margin-left: 11px;
  padding-bottom: 1px;
  border-radius: 6px;
  background: #0d99ff;
  color: #fff;
  font-size: 15px;
  font-weight: 600;
  letter-spacing: -0.2px;
}
.row-bottom { display: flex; align-items: center; padding-left: 660px; }
.tools {
  width: 569px;
  padding: 0 0 1px 10px;
  box-shadow: 0 0 1px rgba(0, 0, 0, .35), 0 2px 6px rgba(0, 0, 0, .16);
}
.tool { width: 44px; height: 43px; border-radius: 6px; display: grid; place-items: center; }
.tool.on { background: #0d99ff; }
.tc { margin: 0 16.500px 0 6.500px; }
.t-text { margin-left: 0; }
.t-chat { margin-left: 11.500px; }
.t-res { margin-left: 9.500px; }
.divider { width: 1px; height: 64px; margin-left: 10px; background: #e0e0e0; }
.dev { width: 54px; height: 33px; margin-left: 17px; border-radius: 7px; background: #f5f5f5; }
.knob {
  width: 31px; height: 33px;
  border-radius: 7px;
  background: #fff;
  box-shadow: 0 0 2px rgba(0, 0, 0, .4);
  display: grid;
  place-items: center;
}
.help {
  width: 44px; height: 44px;
  margin-left: auto;
  margin-right: 16px;
  margin-bottom: 12px;
  border-radius: 50%;
  background: #1e1e1e;
  display: grid;
  place-items: center;
}

/* taskbar */
.taskbar {
  flex: none;
  height: 65px;
  padding-bottom: 2px;
  display: flex;
  align-items: center;
  border-top: 1px solid #c9ced4;
  border-bottom: 1px solid #15131c;
  background: linear-gradient(90deg, #dcd8dd 0, #dad9df 100px, #d9dde2 220px, #dbdee1 540px, #cfe0ea 700px, #d0e0ea 850px, #d5dae6 960px, #d6dae5 1010px, #d1dfe8 1130px, #d4dae5 1300px, #d9dade 1440px, #d3dbe6 1560px, #d4dae7 1750px, #d9dadf 1900px);
}
.widgets { width: 348px; padding: 0 0 6px 36px; }
.start { width: 59px; display: grid; place-items: center; }
.search {
  width: 296px; height: 41px;
  margin: 0 3.500px 0 5.500px;
  padding: 0 5px 0 15px;
  border-radius: 21px;
  background: #f3f5f7;
  box-shadow: 0 0 2px rgba(0, 0, 0, .25);
  display: flex;
  align-items: center;
}
.search span { flex: 1; margin-left: 12px; font-size: 18px; color: #5f6063; letter-spacing: -0.1px; }
.apps { display: flex; }
.app {
  position: relative;
  width: 59.200px; height: 62px;
  display: grid;
  place-items: center;
}
.front::before {
  content: "";
  position: absolute;
  inset: 5px 3px;
  border-radius: 6px;
  background: #e9edf2;
}
.front svg { position: relative; }
.run::after {
  content: "";
  position: absolute;
  left: 25px; bottom: 5px;
  width: 9px; height: 4px;
  border-radius: 2px;
  background: #7d8186;
}
.front::after { left: 19px; width: 22px; background: #23808f; }
.badge {
  position: absolute;
  left: 31px; top: 9px;
  width: 22px; height: 22px;
  border-radius: 50%;
  display: grid;
  place-items: center;
  font-size: 13px;
  color: #f3dcf5;
}
.yellow { background: #fdc10c; }
.violet { background: #a845b8; }
.tray {
  margin-left: auto;
  padding-right: 28px;
  display: grid;
  grid-template-columns: 43px 44px 41px 64px 36px 31px 35px 99px;
  align-items: center;
  justify-items: center;
  font-size: 15.500px;
  line-height: 22px;
  letter-spacing: 0;
  color: #222;
}
.lang { text-align: center; }
.clock { justify-self: end; text-align: right; white-space: nowrap; letter-spacing: 0.2px; }
```
